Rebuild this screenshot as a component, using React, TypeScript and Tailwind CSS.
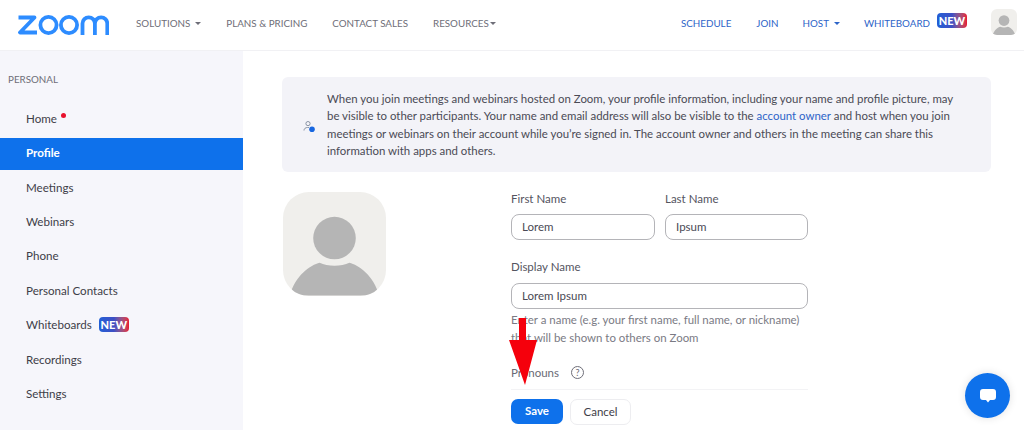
const navLeft = ['SOLUTIONS', 'PLANS & PRICING', 'CONTACT SALES', 'RESOURCES'];
const sideItems = ['Home', 'Profile', 'Meetings', 'Webinars', 'Phone', 'Personal Contacts', 'Whiteboards', 'Recordings', 'Settings'];

function Caret({ className }: { className: string }) {
  return <span className={`inline-block w-0 h-0 border-x-[3.5px] border-x-transparent border-t-[3.5px] ${className}`} />;
}

function NewBadge({ className }: { className: string }) {
  return (
    <span className={`inline-flex items-center justify-center h-[15px] w-[30px] rounded-[4px] bg-gradient-to-r from-[#1f5fd6] via-[#3d4fc4] to-[#e8112d] text-white text-[11px] font-black leading-none ${className}`}>
      NEW
    </span>
  );
}

function Logo() {
  return (
    <svg width="91" height="20" viewBox="0 0 91 20" fill="none" stroke="#2d8cff" strokeWidth="3.8" className="-mt-[1px] shrink-0">
      <path d="M0.5 2.5H16.5L2 17.5H19" strokeLinejoin="round" />
      <circle cx="30.5" cy="10" r="8.1" />
      <circle cx="51" cy="10" r="8.1" />
      <path d="M64.5 20V8.5a6.2 6.2 0 0 1 12.4 0V20M76.9 20V8.5a6.2 6.2 0 0 1 12.4 0V20" />
    </svg>
  );
}

function Avatar({ size }: { size: 'sm' | 'lg' }) {
  const box = size === 'lg' ? 'w-[103px] h-[104px] rounded-[26px]' : 'w-[26px] h-[26px] rounded-[6px]';
  return (
    <div className={`${box} bg-[#f0efec] overflow-hidden shrink-0`}>
      <svg viewBox="0 0 104 104" className="w-full h-full" fill="#b5b5b5">
        <circle cx="52" cy="46" r="21.5" />
        <path d="M7 104C12 84 28 73 37 71c8 4 22 4 30 0 9 2 25 13 30 33z" />
      </svg>
    </div>
  );
}

function Field({ label, value, className }: { label: string; value: string; className: string }) {
  return (
    <div className={className}>
      <div className="text-[11.5px] leading-[15px] text-[#55555f]">{label}</div>
      <div className="mt-[8.5px] h-[26px] rounded-[8px] border border-[#b4b4b8] bg-white pl-[10px] flex items-center text-[11.5px] text-[#4a4a55]">
        {value}
      </div>
    </div>
  );
}

export default function App() {
  return (
    <div className="relative w-[1024px] h-[430px] overflow-hidden bg-white font-['Lato',sans-serif]">
      <header className="h-[51px] flex items-center border-b border-[#f1f1f4] pl-[18px] pr-[7px]">
        <Logo />
        <nav className="ml-[27px] -mt-[3px] flex items-center gap-[25px] text-[9.8px] text-[#6e6e78]">
          {navLeft.map((item, i) => (
            <span key={item} className="flex items-center">
              {item}
              {i === 0 && <Caret className="ml-[5px] border-t-[#6e6e78]" />}
              {i === 3 && <Caret className="ml-[1px] border-t-[#6e6e78]" />}
            </span>
          ))}
        </nav>
        <nav className="ml-auto flex items-center text-[9.8px] text-[#2d64c8]">
          <span className="-mt-[3px]">SCHEDULE</span>
          <span className="ml-[25px] -mt-[3px]">JOIN</span>
          <span className="ml-[24px] -mt-[3px] flex items-center">
            HOST
            <Caret className="ml-[5px] border-t-[#2d64c8]" />
          </span>
          <span className="ml-[24px] -mt-[3px]">WHITEBOARD</span>
          <NewBadge className="ml-[7px] -mt-[10px]" />
          <div className="ml-[24px] -mt-[7px]">
            <Avatar size="sm" />
          </div>
        </nav>
      </header>

      <div className="flex h-[379px]">
        <aside className="w-[243px] shrink-0 bg-[#f6f6fb] pt-[22px]">
          <div className="pl-[8px] text-[9.8px] leading-[12px] text-[#6e6e78]">PERSONAL</div>
          <ul className="mt-[17.5px]">
            {sideItems.map((item) => (
              <li
                key={item}
                className={`h-[32px] pl-[26px] flex items-center text-[11.6px] ${
                  item === 'Profile'
                    ? 'mt-[3.4px] mb-[1.4px] pb-[2px] bg-[#0e71eb] text-white font-bold'
                    : 'mb-[2.4px] text-[#3e3e48]'
                }`}
              >
                {item}
                {item === 'Home' && <span className="ml-[4px] -mt-[6px] w-[5px] h-[5px] rounded-full bg-[#e8112d]" />}
                {item === 'Whiteboards' && <NewBadge className="ml-[7px]" />}
              </li>
            ))}
          </ul>
        </aside>

        <main className="flex-1 pl-[39px] pr-[33px] pt-[26px]">
          <div className="h-[95px] rounded-[6px] bg-[#f3f3f8] flex items-center pl-[21px]">
            <svg width="13" height="13" viewBox="0 0 13 13" fill="none" className="shrink-0 mt-[3px]">
              <circle cx="5" cy="3.6" r="2.1" stroke="#7f8a9c" strokeWidth="0.9" />
              <path d="M1 10.5c0-2 1.6-3 3.5-3H6" stroke="#7f8a9c" strokeWidth="0.9" />
              <circle cx="9" cy="9.3" r="2.8" fill="#1766e0" />
            </svg>
            <p className="ml-[11px] w-[640px] text-[11.43px] leading-[17.5px] text-[#4a4a55]">
              When you join meetings and webinars hosted on Zoom, your profile information, including your name and profile picture, may be visible to other participants. Your name and email address will also be visible to the <span className="text-[#2d64c8]">account owner</span> and host when you join meetings or webinars on their account while you’re signed in. The account owner and others in the meeting can share this information with apps and others.
            </p>
          </div>

          <div className="mt-[20px] flex">
            <div className="ml-[1px]">
              <Avatar size="lg" />
            </div>
            <form className="ml-[125px] w-[297px] -mt-[1.5px]">
              <div className="flex gap-[10px]">
                <Field label="First Name" value="Lorem" className="w-[144px]" />
                <Field label="Last Name" value="Ipsum" className="w-[143px]" />
              </div>
              <Field label="Display Name" value="Lorem Ipsum" className="mt-[19px]" />
              <p className="mt-[2px] text-[11.45px] leading-[18px] text-[#7a7a84]">
                Enter a name (e.g. your first name, full name, or nickname) that will be shown to others on Zoom
              </p>
              <div className="mt-[18.5px] pb-[8.5px] border-b border-[#f3f3f5] flex items-center text-[11.5px] leading-[15px] text-[#6a6a74]">
                Pronouns
                <span className="ml-[12px] w-[13px] h-[13px] rounded-full border border-[#6e6e78] flex items-center justify-center text-[9px] leading-none">?</span>
              </div>
              <div className="mt-[9px] flex gap-[7px]">
                <button type="button" className="w-[52px] h-[25px] rounded-[7px] bg-[#0e71eb] text-white text-[11.5px] font-bold">Save</button>
                <button type="button" className="w-[61px] h-[26px] rounded-[7px] border border-[#ededf0] bg-white text-[#3e3e48] text-[11.5px]">Cancel</button>
              </div>
            </form>
          </div>
        </main>
      </div>

      {/* annotation arrow */}
      <svg className="absolute left-[505px] top-[315px]" width="36" height="72" viewBox="0 0 36 72">
        <path d="M14 3h7V25h11L20 70 4 25h10z" fill="#f5000c" />
      </svg>

      <div className="absolute left-[965px] top-[373px] w-[45px] h-[45px] rounded-full bg-[#0e71eb] shadow-[0_0_8px_rgba(0,0,0,0.12)] flex items-center justify-center">
        <svg width="16" height="16" viewBox="0 0 16 16" fill="white">
          <path d="M3 1h10a3 3 0 0 1 3 3v5a3 3 0 0 1-3 3h-3l-2 2.5L6 12H3a3 3 0 0 1-3-3V4a3 3 0 0 1 3-3z" />
        </svg>
      </div>
    </div>
  );
}
